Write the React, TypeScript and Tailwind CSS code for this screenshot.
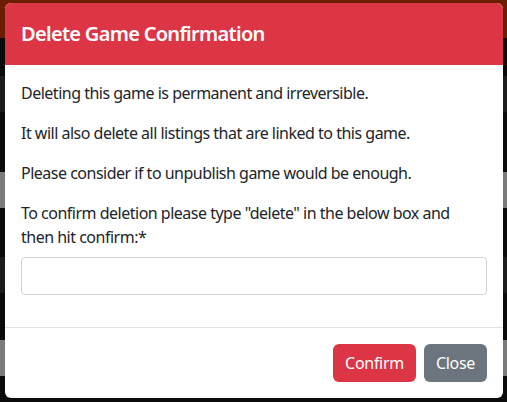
import React from 'react';

const bands = [
    { h: 'h-[38px]', c: 'bg-[#6b1d00]' },
    { h: 'h-[38px]', c: 'bg-[#0b0b0b]' },
    { h: 'h-[36px]', c: 'bg-[#1c1c1c]' },
    { h: 'h-[60px]', c: 'bg-[#0b0b0b]' },
    { h: 'h-[36px]', c: 'bg-[#7b7b7b]' },
    { h: 'h-[49px]', c: 'bg-[#0b0b0b]' },
    { h: 'h-[36px]', c: 'bg-[#1c1c1c]' },
    { h: 'h-[47px]', c: 'bg-[#0b0b0b]' },
    { h: 'h-[36px]', c: 'bg-[#7b7b7b]' },
    { h: 'h-[26px]', c: 'bg-[#0b0b0b]' },
];

export default function App() {
    return (
        <div
            className="relative w-[507px] h-[402px] overflow-hidden bg-[#0b0b0b]"
            style={{ fontFamily: '"Noto Sans", "Open Sans", sans-serif' }}
        >
            {/* dimmed page behind the modal */}
            <div className="flex flex-col">
                {bands.map((b, i) => (
                    <div key={i} className={`${b.h} ${b.c}`} />
                ))}
            </div>

            <div className="absolute left-[5px] top-[3px] w-[498px] rounded-[6px] bg-white overflow-hidden">
                <div className="bg-[#dc3545] px-4 py-4">
                    <h5 className="text-[20px] leading-[30px] font-semibold tracking-[-0.7px] text-white">
                        Delete Game Confirmation
                    </h5>
                </div>
                <div className="p-4 text-[16px] leading-[24px] tracking-[-0.5px] text-[#212529]">
                    <p className="mb-4">Deleting this game is permanent and irreversible.</p>
                    <p className="mb-4">It will also delete all listings that are linked to this game.</p>
                    <p className="mb-4">Please consider if to unpublish game would be enough.</p>
                    <div className="mb-4">
                        <label className="block mb-2">
                            To confirm deletion please type "delete" in the below box and
                            <br />
                            then hit confirm:*
                        </label>
                        <input
                            type="text"
                            className="block w-full h-[38px] rounded-[4px] border border-[#ced4da] px-3 outline-none"
                        />
                    </div>
                </div>
                <div className="flex justify-end gap-2 border-t border-[#dee2e6] px-4 py-4">
                    <button className="h-[38px] rounded-[6px] bg-[#dc3545] px-3 text-[16px] tracking-[-0.3px] text-white">
                        Confirm
                    </button>
                    <button className="h-[38px] rounded-[6px] bg-[#6c757d] px-3 text-[16px] tracking-[-0.3px] text-white">
                        Close
                    </button>
                </div>
            </div>
        </div>
    );
}
